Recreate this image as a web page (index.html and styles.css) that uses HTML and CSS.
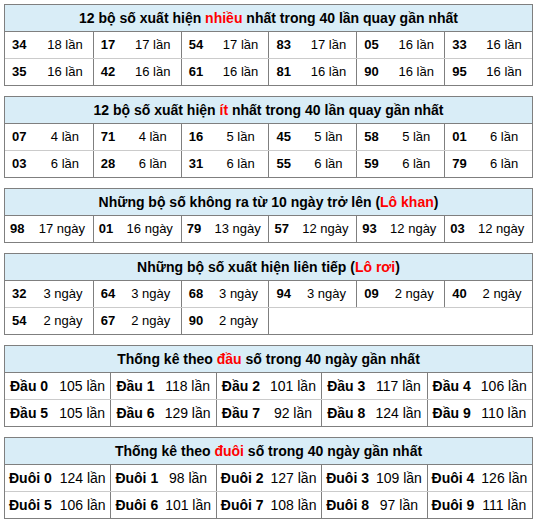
FILE: index.html
```html
<!DOCTYPE html>
<html lang="vi">
<head>
    <meta charset="UTF-8">
    <meta name="viewport" content="width=device-width, initial-scale=1.0">
    <title>Thống kê lô tô</title>
    <link rel="stylesheet" href="styles.css">
</head>
<body>

<!-- nhiều nhất -->
<div class="box">
    <div class="box-head">12 bộ số xuất hiện <span class="hl">nhiều</span> nhất trong 40 lần quay gần nhất</div>
    <div class="row g-lan">
        <span class="num">34</span><span class="cnt">18 lần</span>
        <span class="num">17</span><span class="cnt">17 lần</span>
        <span class="num">54</span><span class="cnt">17 lần</span>
        <span class="num">83</span><span class="cnt">17 lần</span>
        <span class="num">05</span><span class="cnt">16 lần</span>
        <span class="num">33</span><span class="cnt">16 lần</span>
    </div>
    <div class="row g-lan">
        <span class="num">35</span><span class="cnt">16 lần</span>
        <span class="num">42</span><span class="cnt">16 lần</span>
        <span class="num">61</span><span class="cnt">16 lần</span>
        <span class="num">81</span><span class="cnt">16 lần</span>
        <span class="num">90</span><span class="cnt">16 lần</span>
        <span class="num">95</span><span class="cnt">16 lần</span>
    </div>
</div>

<!-- ít nhất -->
<div class="box">
    <div class="box-head">12 bộ số xuất hiện <span class="hl">ít</span> nhất trong 40 lần quay gần nhất</div>
    <div class="row g-lan">
        <span class="num">07</span><span class="cnt">4 lần</span>
        <span class="num">71</span><span class="cnt">4 lần</span>
        <span class="num">16</span><span class="cnt">5 lần</span>
        <span class="num">45</span><span class="cnt">5 lần</span>
        <span class="num">58</span><span class="cnt">5 lần</span>
        <span class="num">01</span><span class="cnt">6 lần</span>
    </div>
    <div class="row g-lan">
        <span class="num">03</span><span class="cnt">6 lần</span>
        <span class="num">28</span><span class="cnt">6 lần</span>
        <span class="num">31</span><span class="cnt">6 lần</span>
        <span class="num">55</span><span class="cnt">6 lần</span>
        <span class="num">59</span><span class="cnt">6 lần</span>
        <span class="num">79</span><span class="cnt">6 lần</span>
    </div>
</div>

<!-- lô khan -->
<div class="box">
    <div class="box-head">Những bộ số không ra từ 10 ngày trở lên (<span class="hl">Lô khan</span>)</div>
    <div class="row g-khan">
        <span class="num">98</span><span class="cnt">17 ngày</span>
        <span class="num">01</span><span class="cnt">16 ngày</span>
        <span class="num">79</span><span class="cnt">13 ngày</span>
        <span class="num">57</span><span class="cnt">12 ngày</span>
        <span class="num">93</span><span class="cnt">12 ngày</span>
        <span class="num">03</span><span class="cnt">12 ngày</span>
    </div>
</div>

<!-- lô rơi -->
<div class="box">
    <div class="box-head">Những bộ số xuất hiện liên tiếp (<span class="hl">Lô rơi</span>)</div>
    <div class="row g-roi">
        <span class="num">32</span><span class="cnt">3 ngày</span>
        <span class="num">64</span><span class="cnt">3 ngày</span>
        <span class="num">68</span><span class="cnt">3 ngày</span>
        <span class="num">94</span><span class="cnt">3 ngày</span>
        <span class="num">09</span><span class="cnt">2 ngày</span>
        <span class="num">40</span><span class="cnt">2 ngày</span>
    </div>
    <div class="row g-roi">
        <span class="num">54</span><span class="cnt">2 ngày</span>
        <span class="num">67</span><span class="cnt">2 ngày</span>
        <span class="num">90</span><span class="cnt">2 ngày</span>
        <span class="num empty"></span>
    </div>
</div>

<!-- đầu -->
<div class="box">
    <div class="box-head">Thống kê theo <span class="hl">đầu</span> số trong 40 ngày gần nhất</div>
    <div class="row big g-dau">
        <span class="num">Đầu 0</span><span class="cnt">105 lần</span>
        <span class="num">Đầu 1</span><span class="cnt">118 lần</span>
        <span class="num">Đầu 2</span><span class="cnt">101 lần</span>
        <span class="num">Đầu 3</span><span class="cnt">117 lần</span>
        <span class="num">Đầu 4</span><span class="cnt">106 lần</span>
    </div>
    <div class="row big g-dau">
        <span class="num">Đầu 5</span><span class="cnt">105 lần</span>
        <span class="num">Đầu 6</span><span class="cnt">129 lần</span>
        <span class="num">Đầu 7</span><span class="cnt">92 lần</span>
        <span class="num">Đầu 8</span><span class="cnt">124 lần</span>
        <span class="num">Đầu 9</span><span class="cnt">110 lần</span>
    </div>
</div>

<!-- đuôi -->
<div class="box">
    <div class="box-head">Thống kê theo <span class="hl">đuôi</span> số trong 40 ngày gần nhất</div>
    <div class="row big g-duoi">
        <span class="num">Đuôi 0</span><span class="cnt">124 lần</span>
        <span class="num">Đuôi 1</span><span class="cnt">98 lần</span>
        <span class="num">Đuôi 2</span><span class="cnt">127 lần</span>
        <span class="num">Đuôi 3</span><span class="cnt">109 lần</span>
        <span class="num">Đuôi 4</span><span class="cnt">126 lần</span>
    </div>
    <div class="row big g-duoi">
        <span class="num">Đuôi 5</span><span class="cnt">106 lần</span>
        <span class="num">Đuôi 6</span><span class="cnt">101 lần</span>
        <span class="num">Đuôi 7</span><span class="cnt">108 lần</span>
        <span class="num">Đuôi 8</span><span class="cnt">97 lần</span>
        <span class="num">Đuôi 9</span><span class="cnt">111 lần</span>
    </div>
</div>

</body>
</html>
```

FILE: styles.css
```css
:root {
    --line-dark: #7f7f7f;
    --line-light: #cbcbcb;
    --head-bg: #d9edf7;
    --text: #000;
    --red: #f00;
}

* {
    margin: 0;
    padding: 0;
    box-sizing: border-box;
}

body {
    margin: 4px;
    font-family: "Liberation Sans", Arial, sans-serif;
    font-size: 13px;
    color: var(--text);
    background: #fff;
}

.box {
    border: 1px solid var(--line-dark);
    margin-bottom: 10px;
}

.box-head {
    height: 27px;
    line-height: 26px;
    font-size: 14px;
    text-align: center;
    font-weight: bold;
    background-color: var(--head-bg);
    border-bottom: 1px solid var(--line-dark);
}

.hl {
    color: var(--red);
}

.row {
    display: grid;
    height: 26px;
    line-height: 26px;
}

.row + .row {
    height: 27px;
    border-top: 1px solid var(--line-light);
}

.row.big {
    font-size: 14px;
}

.num {
    font-weight: bold;
    white-space: nowrap;
}

.num:not(:first-child) {
    border-left: 1px solid var(--line-dark);
}

.cnt {
    text-align: center;
    white-space: nowrap;
}

.empty {
    grid-column: span 6;
}

/* cột theo từng bảng */
.g-lan {
    grid-template-columns: repeat(6, 32px 1fr);
}

.g-lan .num {
    padding-left: 7px;
}

.g-khan {
    grid-template-columns: repeat(6, 26px 1fr);
}

.g-khan .num {
    padding-left: 5px;
}

.g-roi {
    grid-template-columns: repeat(6, 28px 1fr);
}

.g-roi .num {
    padding-left: 7px;
}

.g-dau {
    grid-template-columns: repeat(5, 49px 1fr);
}

.g-dau .num {
    padding-left: 5px;
}

.g-duoi {
    grid-template-columns: repeat(5, 50px 1fr);
}

.g-duoi .num {
    padding-left: 4px;
}
```
